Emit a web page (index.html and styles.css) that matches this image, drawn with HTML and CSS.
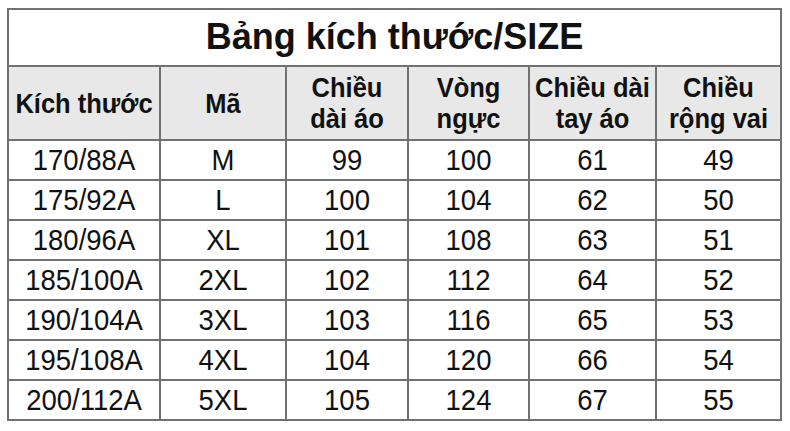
FILE: index.html
```html
<!DOCTYPE html>
<html lang="vi">
<head>
<meta charset="utf-8">
<title>Bảng kích thước/SIZE</title>
<link rel="stylesheet" href="styles.css">
</head>
<body>
<div class="size-table">
  <div class="cell title"><span class="txt">Bảng kích thước/SIZE</span></div>
  <div class="cell head"><span class="txt">Kích thước</span></div>
  <div class="cell head"><span class="txt">Mã</span></div>
  <div class="cell head"><span class="txt">Chiều<br>dài áo</span></div>
  <div class="cell head"><span class="txt">Vòng<br>ngực</span></div>
  <div class="cell head"><span class="txt">Chiều dài<br>tay áo</span></div>
  <div class="cell head"><span class="txt">Chiều<br>rộng vai</span></div>

  <div class="cell"><span class="txt">170/88A</span></div><div class="cell"><span class="txt">M</span></div><div class="cell"><span class="txt">99</span></div><div class="cell"><span class="txt">100</span></div><div class="cell"><span class="txt">61</span></div><div class="cell"><span class="txt">49</span></div>
  <div class="cell"><span class="txt">175/92A</span></div><div class="cell"><span class="txt">L</span></div><div class="cell"><span class="txt">100</span></div><div class="cell"><span class="txt">104</span></div><div class="cell"><span class="txt">62</span></div><div class="cell"><span class="txt">50</span></div>
  <div class="cell"><span class="txt">180/96A</span></div><div class="cell"><span class="txt">XL</span></div><div class="cell"><span class="txt">101</span></div><div class="cell"><span class="txt">108</span></div><div class="cell"><span class="txt">63</span></div><div class="cell"><span class="txt">51</span></div>
  <div class="cell"><span class="txt">185/100A</span></div><div class="cell"><span class="txt">2XL</span></div><div class="cell"><span class="txt">102</span></div><div class="cell"><span class="txt">112</span></div><div class="cell"><span class="txt">64</span></div><div class="cell"><span class="txt">52</span></div>
  <div class="cell"><span class="txt">190/104A</span></div><div class="cell"><span class="txt">3XL</span></div><div class="cell"><span class="txt">103</span></div><div class="cell"><span class="txt">116</span></div><div class="cell"><span class="txt">65</span></div><div class="cell"><span class="txt">53</span></div>
  <div class="cell"><span class="txt">195/108A</span></div><div class="cell"><span class="txt">4XL</span></div><div class="cell"><span class="txt">104</span></div><div class="cell"><span class="txt">120</span></div><div class="cell"><span class="txt">66</span></div><div class="cell"><span class="txt">54</span></div>
  <div class="cell"><span class="txt">200/112A</span></div><div class="cell"><span class="txt">5XL</span></div><div class="cell"><span class="txt">105</span></div><div class="cell"><span class="txt">124</span></div><div class="cell"><span class="txt">67</span></div><div class="cell"><span class="txt">55</span></div>
</div>
</body>
</html>
```

FILE: styles.css
```css
html, body {
  margin: 0;
  padding: 0;
  background: #ffffff;
}

body {
  padding: 8px 0 0 7px;
  font-family: "Liberation Sans", Arial, sans-serif;
  color: #111111;
}

.size-table {
  display: inline-grid;
  grid-template-columns: 150px 124px 120px 119px 125px 123px;
  grid-template-rows: 55px 72px repeat(7, 38px);
  gap: 2px;
  padding: 2px;
  background: #717171;
}

.cell {
  background: #ffffff;
  display: flex;
  align-items: center;
  justify-content: center;
  text-align: center;
  font-size: 27.5px;
  line-height: 28px;
  white-space: nowrap;
}

.txt {
  display: inline-block;
  transform: scaleY(1.1);
}

.title {
  grid-column: 1 / -1;
  font-size: 36px;
  line-height: 40px;
  font-weight: 700;
  padding-bottom: 2px;
}

.title .txt {
  transform: none;
}

.head {
  background: #e8e8e8;
  font-weight: 700;
  font-size: 25.5px;
}
```
